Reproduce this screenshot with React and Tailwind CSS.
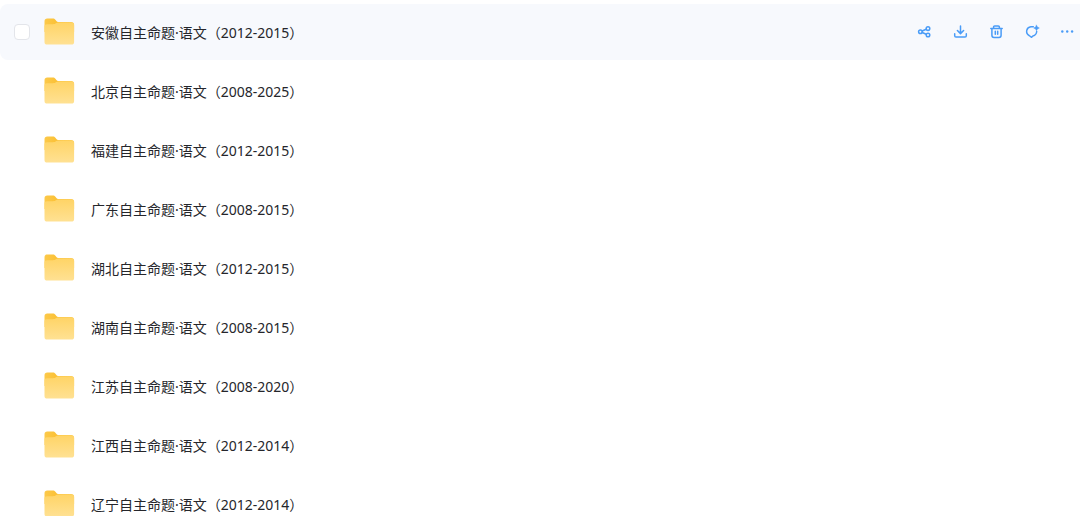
import React from "react";

const folders = [
  "安徽自主命题·语文（2012-2015）",
  "北京自主命题·语文（2008-2025）",
  "福建自主命题·语文（2012-2015）",
  "广东自主命题·语文（2008-2015）",
  "湖北自主命题·语文（2012-2015）",
  "湖南自主命题·语文（2008-2015）",
  "江苏自主命题·语文（2008-2020）",
  "江西自主命题·语文（2012-2014）",
  "辽宁自主命题·语文（2012-2014）",
];

function FolderIcon() {
  return (
    <svg className="h-8 w-8 shrink-0" viewBox="0 0 32 32" aria-hidden="true">
      <defs>
        <linearGradient id="folder-back" x1="0" y1="0" x2="1" y2="0">
          <stop offset="0" stopColor="#fcc94a" />
          <stop offset="0.4" stopColor="#fbc136" />
          <stop offset="1" stopColor="#fccb50" />
        </linearGradient>
        <linearGradient id="folder-front" x1="0" y1="0" x2="0" y2="1">
          <stop offset="0" stopColor="#ffd466" />
          <stop offset="1" stopColor="#ffe193" />
        </linearGradient>
      </defs>
      <path
        d="M1.500 5.400C1.500 3.600 2.600 2.600 4.200 2.600H9.800c1.200 0 1.900.4 2.600 1.200l1 1.300c.5.600 1 .8 1.800.8H28.300c1.700 0 2.800 1 2.800 2.700V16H1.500Z"
        fill="url(#folder-back)"
      />
      <path
        d="M1.500 10.400C1.500 9 2.500 8.200 3.900 8.200H10c1.300 0 2-.3 2.800-.9l.4-.3c.6-.4 1.200-.6 2-.6H28.500c1.600 0 2.600 1 2.600 2.600V25.900c0 1.700-1 2.700-2.700 2.700H4.200C2.500 28.600 1.500 27.600 1.500 25.900Z"
        fill="url(#folder-front)"
      />
    </svg>
  );
}

function ShareIcon() {
  return (
    <>
      <circle cx="4.400" cy="7.700" r="1.800" />
      <circle cx="12" cy="4.600" r="1.800" />
      <circle cx="12" cy="11" r="1.800" />
      <path d="M6.200 7 10.200 5.300M6.200 8.500l4 1.800" />
    </>
  );
}

function DownloadIcon() {
  return <path d="M8.500 2v7.300M5.400 6.500 8.500 9.600 11.600 6.500M2.700 9.800v2c0 .8.500 1.300 1.300 1.300h9c.8 0 1.300-.5 1.300-1.300v-2" />;
}

function TrashIcon() {
  return <path d="M2.800 4.500h11.400M5.600 4.200V3c0-.7.400-1.100 1.100-1.100h3.600c.7 0 1.100.4 1.100 1.100v1.200M3.900 4.700v6.600c0 1.300.8 2.100 2.100 2.100h5c1.300 0 2.100-.8 2.100-2.100V4.700M7.300 7.200v3M9.700 7.200v3" />;
}

function TransferIcon() {
  return (
    <>
      <path d="M9.300 2.700H6.900A4.700 4.700 0 0 0 5.100 11.500L7.600 13.300 8.900 11.900A4.900 4.900 0 0 0 12.700 7.500" />
      <path
        d="m12.500 1.200.9 1.900 1.900.9-1.900.9-.9 1.900-.9-1.900L9.700 4l1.900-.9Z"
        fill="currentColor"
        strokeWidth="0.5"
      />
    </>
  );
}

function MoreIcon() {
  return (
    <g fill="currentColor" stroke="none">
      <circle cx="2.300" cy="7.500" r="1.200" />
      <circle cx="7.200" cy="7.500" r="1.200" />
      <circle cx="12.100" cy="7.500" r="1.200" />
    </g>
  );
}

const actions = [
  { label: "分享", Icon: ShareIcon },
  { label: "下载", Icon: DownloadIcon },
  { label: "删除", Icon: TrashIcon },
  { label: "转存", Icon: TransferIcon },
  { label: "更多", Icon: MoreIcon },
];

function Actions() {
  return (
    <div className="ml-auto flex shrink-0 gap-4">
      {actions.map(({ label, Icon }) => (
        <button key={label} type="button" aria-label={label} className="flex h-5 w-5 items-center justify-center text-[#4a9cf7]">
          <svg
            className="h-4 w-4"
            viewBox="0 0 16 16"
            fill="none"
            stroke="currentColor"
            strokeWidth="1.500"
            strokeLinecap="round"
            strokeLinejoin="round"
            aria-hidden="true"
          >
            <Icon />
          </svg>
        </button>
      ))}
    </div>
  );
}

function FolderRow({ name, active }) {
  return (
    <li className={active ? "flex h-14 items-center rounded-l-lg bg-[#f7f9fd] pr-0.5 pl-3.5" : "flex h-14 items-center pr-0.5 pl-3.5"}>
      <div className="flex w-[29px] shrink-0 items-center">
        {active && (
          <input
            type="checkbox"
            aria-label={name}
            className="h-4 w-4 appearance-none rounded-[4px] border border-[#e3e5ea] bg-white checked:bg-[#4a9cf7]"
          />
        )}
      </div>
      <FolderIcon />
      <a href="#" className="ml-4 truncate pt-0.5 text-sm text-[#25262b]">
        {name}
      </a>
      {active && <Actions />}
    </li>
  );
}

export default function App() {
  return (
    <main className="h-screen overflow-hidden bg-white pt-1 font-['Noto_Sans','Noto_Sans_CJK_SC',sans-serif]">
      <ul className="flex flex-col gap-[3px]">
        {folders.map((name, index) => (
          <FolderRow key={name} name={name} active={index === 0} />
        ))}
      </ul>
    </main>
  );
}
